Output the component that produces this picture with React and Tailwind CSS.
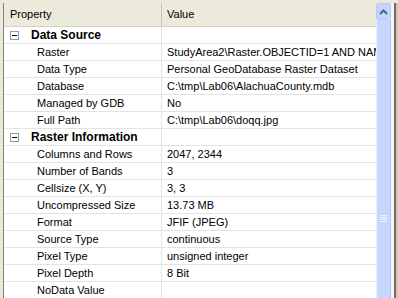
const groups = [
  {
    title: "Data Source",
    rows: [
      ["Raster", "StudyArea2\\Raster.OBJECTID=1 AND NAM"],
      ["Data Type", "Personal GeoDatabase Raster Dataset"],
      ["Database", "C:\\tmp\\Lab06\\AlachuaCounty.mdb"],
      ["Managed by GDB", "No"],
      ["Full Path", "C:\\tmp\\Lab06\\doqq.jpg"],
    ],
  },
  {
    title: "Raster Information",
    rows: [
      ["Columns and Rows", "2047, 2344"],
      ["Number of Bands", "3"],
      ["Cellsize (X, Y)", "3, 3"],
      ["Uncompressed Size", "13.73 MB"],
      ["Format", "JFIF (JPEG)"],
      ["Source Type", "continuous"],
      ["Pixel Type", "unsigned integer"],
      ["Pixel Depth", "8 Bit"],
      ["NoData Value", ""],
    ],
  },
];

function MinusBox() {
  return (
    <div className="w-[9px] h-[9px] border border-[#919b9c] bg-white flex items-center justify-center shrink-0">
      <div className="w-[5px] h-px bg-black" />
    </div>
  );
}

function Row({ name, value }) {
  return (
    <div className="flex h-[17px] border-b border-[#e3e3e3] shrink-0">
      <div className="w-[158px] shrink-0 border-r border-[#e3e3e3] pl-[33px] leading-[17px] whitespace-nowrap overflow-hidden">
        {name}
      </div>
      <div className="flex-1 pl-[5px] leading-[17px] whitespace-nowrap overflow-hidden">{value}</div>
    </div>
  );
}

function GroupRow({ title }) {
  return (
    <div className="flex h-[17px] border-b border-[#e3e3e3] shrink-0">
      <div className="w-[158px] shrink-0 border-r border-[#e3e3e3] pl-[6px] flex items-center gap-[12px]">
        <MinusBox />
        <span className="font-bold text-[12px] leading-[16px] whitespace-nowrap">{title}</span>
      </div>
      <div className="flex-1" />
    </div>
  );
}

function Scrollbar() {
  return (
    <div className="w-[15px] shrink-0 bg-[#f4f3ee] flex flex-col">
      <div className="h-[17px] rounded-[2px] border border-[#b6c9f6] bg-[#c4d5fc] flex items-center justify-center shrink-0">
        <svg width="9" height="6" viewBox="0 0 9 6">
          <path d="M1 5 L4.5 1.5 L8 5" fill="none" stroke="#4d6185" strokeWidth="2" />
        </svg>
      </div>
      <div className="flex-1 border-l border-[#e6eeff] border-r border-r-[#adc3f5] bg-[#c6d6fc] flex flex-col items-center pt-[195px]">
        <div className="flex flex-col gap-px w-[7px]">
          <div className="h-px bg-[#eef4fe]" />
          <div className="h-px bg-[#eef4fe]" />
          <div className="h-px bg-[#eef4fe]" />
          <div className="h-px bg-[#eef4fe]" />
        </div>
      </div>
    </div>
  );
}

export default function App() {
  return (
    <div
      className="w-[398px] h-[298px] bg-[#ece9d8] flex pt-[3px] pl-[3px] overflow-hidden text-[11px] text-black"
      style={{ fontFamily: '"Liberation Sans", Arial, sans-serif' }}
    >
      <div className="flex-1 flex border-l border-[#808080] overflow-hidden">
        <div className="flex-1 bg-white flex flex-col overflow-hidden">
          <div className="flex h-[24px] shrink-0 bg-[#ebeadb] border-b border-[#d6d2c2]">
            <div className="w-[158px] shrink-0 border-r border-[#c7c5b2] pl-[6px] flex items-center">Property</div>
            <div className="flex-1 pl-[5px] flex items-center">Value</div>
          </div>
          {groups.map((g) => (
            <div key={g.title} className="flex flex-col">
              <GroupRow title={g.title} />
              {g.rows.map(([n, v]) => (
                <Row key={n} name={n} value={v} />
              ))}
            </div>
          ))}
        </div>
        <Scrollbar />
      </div>
      <div className="w-[3px] shrink-0 bg-[#f6f5ef]" />
      <div className="w-[2px] shrink-0 bg-[#716f64]" />
      <div className="w-[2px] shrink-0 bg-[#ccc7ba]" />
    </div>
  );
}
